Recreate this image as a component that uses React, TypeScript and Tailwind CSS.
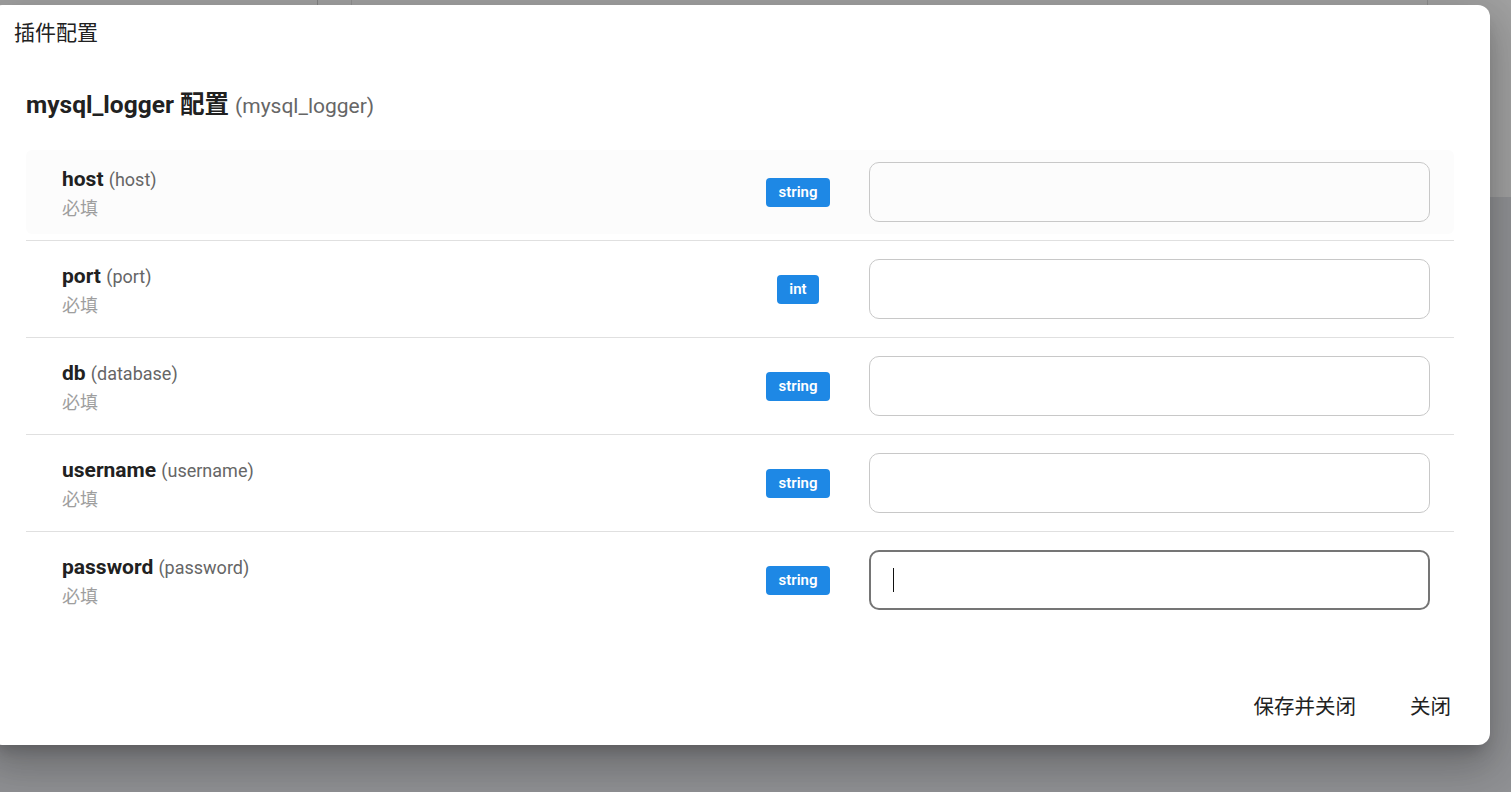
import React from 'react'

const fields = [
  { name: 'host', key: 'host', type: 'string' },
  { name: 'port', key: 'port', type: 'int' },
  { name: 'db', key: 'database', type: 'string' },
  { name: 'username', key: 'username', type: 'string' },
  { name: 'password', key: 'password', type: 'string' },
]

export default function App() {
  return (
    <div
      className="relative h-[792px] w-full overflow-hidden bg-[#e4e6ea]"
      style={{ fontFamily: 'Roboto, "Noto Sans CJK SC", sans-serif' }}
    >
      {/* page behind the overlay */}
      <div className="flex h-[197px] bg-white">
        <div className="w-[318px] border-r border-[#d0d0d0]" />
        <div className="w-[34px] border-r border-[#e6e6e6]" />
        <div className="flex-1" />
        <div className="w-[84px] border-l border-[#e0e0e0]" />
      </div>

      {/* backdrop */}
      <div className="absolute inset-0 bg-black/[0.37]" />

      {/* dialog */}
      <div className="absolute left-[-10px] top-[5px] flex h-[740px] w-[1500px] flex-col rounded-[12px] bg-white text-[#212121] shadow-[0_11px_15px_-7px_rgba(0,0,0,0.2),0_24px_38px_3px_rgba(0,0,0,0.14),0_9px_46px_8px_rgba(0,0,0,0.12)]">
        <div className="px-[24px] pt-[12px] text-[21px] leading-[32px]">插件配置</div>

        <div className="px-[36px] pt-[40px]">
          <h2 className="text-[24.5px] font-bold leading-[32px]">
            mysql_logger 配置{' '}
            <span className="text-[21px] font-normal text-[#666]">(mysql_logger)</span>
          </h2>

          <div className="mt-[28px]">
            {fields.map((f, i) => (
              <div key={f.name}>
                {i > 0 && <div className="my-[6px] h-px bg-[#e0e0e0]" />}
                <div
                  className={`flex h-[84px] items-center rounded-[6px] pl-[36px] pr-[24px] ${
                    i === 0 ? 'bg-[#fcfcfc]' : 'bg-white'
                  }`}
                >
                  <div className="flex-1 pt-[2px]">
                    <div className="text-[21px] leading-[28px]">
                      <span className="font-bold">{f.name}</span>{' '}
                      <span className="text-[18px] text-[#666]">({f.key})</span>
                    </div>
                    <div className="mt-[2px] text-[18px] leading-[26px] text-[#9e9e9e]">必填</div>
                  </div>
                  <div className="flex w-[142px] justify-center">
                    <span className="flex h-[29px] items-center rounded-[4px] bg-[#1e88e5] px-[12.5px] text-[15px] font-semibold text-white">
                      {f.type}
                    </span>
                  </div>
                  {i === 4 ? (
                    <div className="flex h-[60px] w-[561px] items-center rounded-[10px] border-2 border-[#757575] pl-[22px]">
                      <span className="h-[24px] w-px bg-[#111]" />
                    </div>
                  ) : (
                    <div className="h-[60px] w-[561px] rounded-[10px] border border-[#c8c8c8]" />
                  )}
                </div>
              </div>
            ))}
          </div>
        </div>

        <div className="mt-auto flex justify-end gap-[54px] pb-[24px] pr-[39px] text-[20.5px] leading-[28px] text-[#222]">
          <button>保存并关闭</button>
          <button>关闭</button>
        </div>
      </div>
    </div>
  )
}
